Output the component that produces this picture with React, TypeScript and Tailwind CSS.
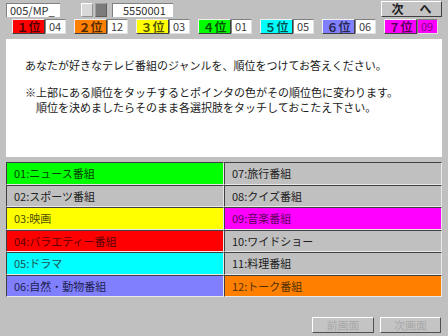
import React from "react";

const ranks = [
  { n: "１", bg: "bg-[#ff0000]", v: "04", vbg: "bg-white", vtext: "text-[#404040]" },
  { n: "２", bg: "bg-[#ff8000]", v: "12", vbg: "bg-white", vtext: "text-[#404040]" },
  { n: "３", bg: "bg-[#ffff00]", v: "03", vbg: "bg-white", vtext: "text-[#404040]" },
  { n: "４", bg: "bg-[#00ff00]", v: "01", vbg: "bg-white", vtext: "text-[#404040]" },
  { n: "５", bg: "bg-[#00ffff]", v: "05", vbg: "bg-white", vtext: "text-[#404040]" },
  { n: "６", bg: "bg-[#8080ff]", v: "06", vbg: "bg-white", vtext: "text-[#404040]" },
  { n: "７", bg: "bg-[#ff00ff]", v: "09", vbg: "bg-[#ff00ff]", vtext: "text-[#800080]" },
];

const left = [
  { t: "01:ニュース番組", c: "bg-[#00ff00] text-[#004000]" },
  { t: "02:スポーツ番組", c: "bg-[#c0c0c0] text-[#202020]" },
  { t: "03:映画", c: "bg-[#ffff00] text-[#505000]" },
  { t: "04:バラエティー番組", c: "bg-[#ff0000] text-[#600000]" },
  { t: "05:ドラマ", c: "bg-[#00ffff] text-[#205050]" },
  { t: "06:自然・動物番組", c: "bg-[#8080ff] text-[#202050]" },
];
const right = [
  { t: "07:旅行番組", c: "bg-[#c0c0c0] text-[#202020]" },
  { t: "08:クイズ番組", c: "bg-[#c0c0c0] text-[#202020]" },
  { t: "09:音楽番組", c: "bg-[#ff00ff] text-[#600060]" },
  { t: "10:ワイドショー", c: "bg-[#c0c0c0] text-[#202020]" },
  { t: "11:料理番組", c: "bg-[#c0c0c0] text-[#202020]" },
  { t: "12:トーク番組", c: "bg-[#ff8000] text-[#503000]" },
];

const font = { fontFamily: "'MS Gothic','Noto Sans CJK JP',sans-serif" };

function Cell({ t, c }: { t: string; c: string }) {
  return (
    <div
      className={`flex items-center pl-[7px] text-[11px] border-t border-l border-t-[#404040] border-l-[#404040] border-b border-r border-b-[#e8e8e8] border-r-[#e8e8e8] ${c}`}
    >
      {t}
    </div>
  );
}

export default function App() {
  return (
    <div className="w-[448px] h-[336px] bg-[#c0c0c0] overflow-hidden text-black" style={font}>
      {/* Row 1 */}
      <div className="flex items-start h-[19px]">
        <div className="ml-[6px] mt-[3px] w-[54px] h-[14px] bg-white border-t border-l border-[#808080] border-b-[#e0e0e0] border-r-[#e0e0e0] text-[11px] leading-[12px] pl-[3px] text-[#303030]">
          005/MP_
        </div>
        <div className="ml-[21px] mt-[3px] w-[12px] h-[14px] bg-[#d8d8d8] border border-t-white border-l-white border-b-[#909090] border-r-[#909090]" />
        <div className="ml-[2px] mt-[3px] w-[12px] h-[14px] bg-[#7c7c7c] border border-t-[#a0a0a0] border-l-[#a0a0a0] border-b-[#606060] border-r-[#606060]" />
        <div className="ml-[5px] mt-[3px] w-[61px] h-[14px] bg-white border-t border-l border-[#808080] border-b-[#e0e0e0] border-r-[#e0e0e0] text-[11px] leading-[12px] pl-[10px] text-[#303030]">
          5550001
        </div>
        <div className="ml-[208px] mt-[1px] w-[61px] h-[16px] bg-[#c4c4c4] border border-t-white border-l-white border-b-[#404040] border-r-[#404040] flex items-center justify-center text-[12px] font-bold leading-none text-[#202020]">
          <span>次</span>
          <span className="ml-[16px]">へ</span>
        </div>
      </div>

      {/* Row 2 ranks */}
      <div className="flex h-[15px] pl-[12px]">
        {ranks.map((r, i) => (
          <div key={i} className="w-[62px] flex">
            <div
              className={`w-[33px] h-[15px] ${r.bg} border border-t-[#f0f0f0] border-l-[#f0f0f0] border-b-[#404040] border-r-[#404040] flex items-center justify-center text-[12px] font-bold leading-none text-black/70`}
            >
              {r.n}位
            </div>
            <div
              className={`w-[21px] h-[15px] ${r.vbg} ${r.vtext} border border-t-[#808080] border-l-[#808080] border-b-[#e0e0e0] border-r-[#e0e0e0] text-[11px] leading-[13px] pl-[3px]`}
            >
              {r.v}
            </div>
          </div>
        ))}
      </div>

      {/* Message panel */}
      <div className="mx-[6px] mt-[5px] h-[118px] bg-white pt-[19px] pl-[19px] text-[11px] leading-[15px] text-[#202020]">
        <div>あなたが好きなテレビ番組のジャンルを、順位をつけてお答えください。</div>
        <div className="mt-[12px]">※上部にある順位をタッチするとポインタの色がその順位色に変わります。</div>
        <div>　順位を決めましたらそのまま各選択肢をタッチしておこたえ下さい。</div>
      </div>

      {/* Grid */}
      <div className="mx-[6px] mt-[5px] h-[135px] grid grid-cols-2 grid-rows-6 grid-flow-col">
        {left.map((x, i) => (
          <Cell key={"l" + i} t={x.t} c={x.c} />
        ))}
        {right.map((x, i) => (
          <Cell key={"r" + i} t={x.t} c={x.c} />
        ))}
      </div>

      {/* Bottom buttons */}
      <div className="flex justify-end gap-[6px] mr-[7px] mt-[20px]">
        <div className="w-[62px] h-[16px] bg-[#c4c4c4] border border-t-white border-l-white border-b-[#505050] border-r-[#505050] flex items-center justify-center text-[11px] leading-none text-[#a8a8a8]">
          前画面
        </div>
        <div className="w-[61px] h-[16px] bg-[#c4c4c4] border border-t-white border-l-white border-b-[#505050] border-r-[#505050] flex items-center justify-center text-[11px] leading-none text-[#a8a8a8]">
          次画面
        </div>
      </div>
    </div>
  );
}
